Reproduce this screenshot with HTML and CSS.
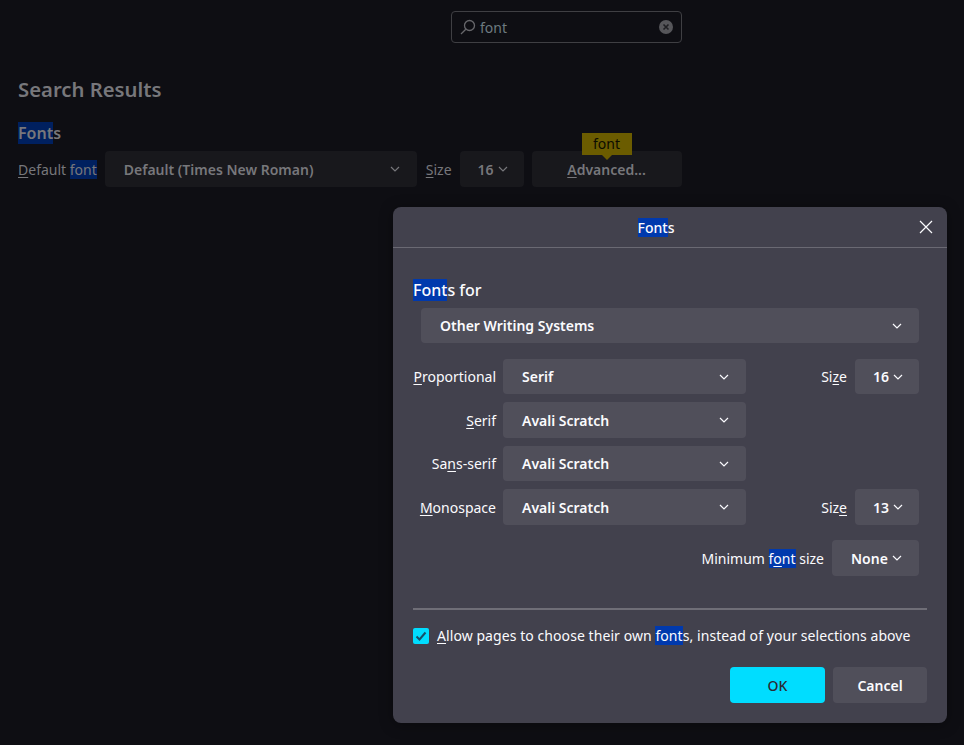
FILE: index.html

```html
<!DOCTYPE html>
<html lang="en">
<head>
  <meta charset="UTF-8" />
  <title>Settings - Fonts</title>
  <link rel="stylesheet" href="styles.css">
</head>
<body>
  <main class="page">
    <div class="search-box">
      <svg class="search-icon" width="16" height="16" viewBox="0 0 16 16"><circle cx="9.5" cy="6.5" r="5" /><path d="M5.8 10.2 1 15" /></svg>
      <span class="search-text">font</span>
      <svg class="search-clear" width="14" height="14" viewBox="0 0 14 14"><circle cx="7" cy="7" r="7" /><path d="M4.5 4.5l5 5M9.5 4.5l-5 5" /></svg>
    </div>

    <h1 class="results-title">Search Results</h1>
    <h2 class="section-title"><span class="hl-dim">Font</span>s</h2>

    <div class="default-row">
      <span class="default-label"><u>D</u>efault <span class="hl-dim">font</span></span>
      <div class="dim-select dim-select-font">
        <span>Default (Times New Roman)</span>
        <svg class="chevron" width="10" height="6" viewBox="0 0 10 6"><path d="M1 1l4 4 4-4" /></svg>
      </div>
      <span class="default-label"><u>S</u>ize</span>
      <div class="dim-select dim-select-size">
        <span>16</span>
        <svg class="chevron" width="10" height="6" viewBox="0 0 10 6"><path d="M1 1l4 4 4-4" /></svg>
      </div>
      <div class="dim-button">
        <span><u>A</u>dvanced...</span>
        <div class="tooltip">font</div>
      </div>
    </div>
  </main>

  <section class="dialog">
    <header class="dialog-head">
      <div class="dialog-title"><span class="hl">Font</span>s</div>
      <svg class="dialog-close" width="14" height="14" viewBox="0 0 14 14"><path d="M1 1l12 12M13 1L1 13" /></svg>
    </header>

    <div class="dialog-body">
      <h3 class="fonts-for"><span class="hl">Font</span>s for</h3>
      <div class="select select-full">
        <span>Other Writing Systems</span>
        <svg class="chevron" width="10" height="6" viewBox="0 0 10 6"><path d="M1 1l4 4 4-4" /></svg>
      </div>

      <div class="font-rows">
        <div class="font-row">
          <span class="row-label"><u>P</u>roportional</span>
          <div class="select select-wide">
            <span>Serif</span>
            <svg class="chevron" width="10" height="6" viewBox="0 0 10 6"><path d="M1 1l4 4 4-4" /></svg>
          </div>
          <div class="size-group">
            <span>Si<u>z</u>e</span>
            <div class="select select-size">
              <span>16</span>
              <svg class="chevron" width="10" height="6" viewBox="0 0 10 6"><path d="M1 1l4 4 4-4" /></svg>
            </div>
          </div>
        </div>
        <div class="font-row">
          <span class="row-label"><u>S</u>erif</span>
          <div class="select select-wide">
            <span>Avali Scratch</span>
            <svg class="chevron" width="10" height="6" viewBox="0 0 10 6"><path d="M1 1l4 4 4-4" /></svg>
          </div>
        </div>
        <div class="font-row">
          <span class="row-label">Sa<u>n</u>s-serif</span>
          <div class="select select-wide">
            <span>Avali Scratch</span>
            <svg class="chevron" width="10" height="6" viewBox="0 0 10 6"><path d="M1 1l4 4 4-4" /></svg>
          </div>
        </div>
        <div class="font-row">
          <span class="row-label"><u>M</u>onospace</span>
          <div class="select select-wide">
            <span>Avali Scratch</span>
            <svg class="chevron" width="10" height="6" viewBox="0 0 10 6"><path d="M1 1l4 4 4-4" /></svg>
          </div>
          <div class="size-group">
            <span>Siz<u>e</u></span>
            <div class="select select-size">
              <span>13</span>
              <svg class="chevron" width="10" height="6" viewBox="0 0 10 6"><path d="M1 1l4 4 4-4" /></svg>
            </div>
          </div>
        </div>
      </div>

      <div class="min-row">
        <span>Minimum <span class="hl">f<u>o</u>nt</span> size</span>
        <div class="select select-min">
          <span>None</span>
          <svg class="chevron" width="10" height="6" viewBox="0 0 10 6"><path d="M1 1l4 4 4-4" /></svg>
        </div>
      </div>

      <hr class="divider" />

      <div class="check-row">
        <svg class="checkbox" width="16" height="16" viewBox="0 0 16 16"><rect width="16" height="16" rx="2" /><path d="M3.5 8.5l3 3 6-7" /></svg>
        <span class="check-label"><u>A</u>llow pages to choose their own <span class="hl">font</span>s, instead of your selections above</span>
      </div>

      <div class="dialog-actions">
        <button class="btn btn-ok">OK</button>
        <button class="btn btn-cancel">Cancel</button>
      </div>
    </div>
  </section>
</body>
</html>
```

FILE: styles.css

```css
html, body {
  height: 100%;
}

body {
  margin: 0;
  background: #0e0e13;
  color: #fbfbfe;
  font-family: "Noto Sans", "Open Sans", sans-serif;
  font-size: 14px;
  overflow: hidden;
}

u {
  text-underline-offset: 2px;
}

.hl {
  background: #0039ad;
}

.hl-dim {
  background: #00205f;
}

/* page behind the dialog */
.page {
  width: 664px;
  margin-left: 18px;
  padding-top: 11px;
  display: flex;
  flex-direction: column;
  color: #77777b;
}

.search-box {
  align-self: flex-end;
  width: 231px;
  height: 32px;
  box-sizing: border-box;
  border: 1px solid #3f3f43;
  border-radius: 4px;
  display: flex;
  align-items: center;
  padding: 0 8px;
  gap: 4px;
}

.search-icon {
  fill: none;
  stroke: #67676b;
  stroke-width: 1.3;
}

.search-text {
  flex: 1;
  color: #6d7a80;
  font-size: 14px;
}

.search-clear circle {
  fill: #56565a;
}

.search-clear path {
  stroke: #1f1f23;
  stroke-width: 1.6;
}

.results-title {
  margin: 32px 0 0;
  font-size: 20.3px;
  line-height: 28px;
  font-weight: 600;
}

.section-title {
  margin: 19px 0 0;
  font-size: 16px;
  line-height: 22px;
  font-weight: 600;
}

.default-row {
  margin-top: 7px;
  display: flex;
  align-items: center;
  gap: 8px;
}

.dim-select, .dim-button {
  height: 36px;
  box-sizing: border-box;
  background: #18181c;
  border-radius: 4px;
  display: flex;
  align-items: center;
  font-weight: 600;
  position: relative;
}

.dim-select-font {
  width: 312px;
  margin-right: 1px;
  padding: 0 17px 0 19px;
  justify-content: space-between;
}

.dim-select-size {
  width: 64px;
  padding: 0 17px 0 18px;
  gap: 4px;
}

.dim-button {
  width: 150px;
  justify-content: center;
}

.chevron {
  fill: none;
  stroke: currentColor;
  stroke-width: 1.2;
  flex: none;
}

.tooltip {
  position: absolute;
  left: 50px;
  top: -18px;
  width: 50px;
  height: 22px;
  background: #6b5c00;
  color: #0c0c00;
  font-weight: 400;
  font-size: 14px;
  line-height: 22px;
  text-align: center;
}

.tooltip::after {
  content: "";
  position: absolute;
  left: 20px;
  top: 22px;
  border: 5px solid transparent;
  border-top-color: #6b5c00;
  border-bottom: 0;
}

/* dialog */
.dialog {
  position: absolute;
  left: 393px;
  top: 207px;
  width: 554px;
  height: 516px;
  background: #42414d;
  border-radius: 8px;
  box-shadow: 0 2px 14px rgba(0, 0, 0, 0.35);
}

.dialog-head {
  box-sizing: border-box;
  border-bottom: 1px solid #6a6973;
  height: 41px;
  display: flex;
  align-items: center;
  padding-right: 14px;
}

.dialog-title {
  flex: 1;
  text-align: center;
  font-size: 14px;
  font-weight: 500;
}

.dialog-close {
  fill: none;
  stroke: #fbfbfe;
  stroke-width: 1.2;
}

.dialog-body {
  padding: 30px 20px 0;
}

.fonts-for {
  margin: 0;
  font-size: 16px;
  line-height: 24px;
  font-weight: 500;
}

.select {
  box-sizing: border-box;
  background: #504f5a;
  border-radius: 4px;
  display: flex;
  align-items: center;
  font-weight: 600;
}

.select-full {
  margin: 6px 8px 0;
  height: 35px;
  padding: 0 17px 0 19px;
  justify-content: space-between;
}

.font-rows {
  margin: 16px 8px 0 0;
  display: flex;
  flex-direction: column;
  gap: 8px;
}

.font-row {
  display: flex;
  align-items: center;
  gap: 7px;
}

.row-label {
  width: 83px;
  text-align: right;
  white-space: nowrap;
}

.select-wide {
  width: 243px;
  height: 35px;
  padding: 0 17px 0 19px;
  justify-content: space-between;
}

.size-group {
  margin-left: auto;
  display: flex;
  align-items: center;
  gap: 8px;
}

.select-size {
  width: 64px;
  height: 35px;
  padding: 0 17px 0 18px;
  gap: 4px;
}

.font-row:nth-child(even) .select {
  height: 36px;
}

.min-row {
  margin: 15px 8px 0 0;
  display: flex;
  justify-content: flex-end;
  align-items: center;
  gap: 8px;
}

.select-min {
  width: 87px;
  height: 36px;
  padding: 0 18px 0 19px;
  gap: 4px;
}

.divider {
  margin: 32px 0 0;
  border: 0;
  height: 2px;
  background: #6f6e77;
}

.check-row {
  margin-top: 15px;
  display: flex;
  align-items: center;
  gap: 8px;
  height: 22px;
  white-space: nowrap;
}

.check-label {
  letter-spacing: 0.07px;
  margin-bottom: 2px;
}

.checkbox rect {
  fill: #00ddff;
}

.checkbox path {
  fill: none;
  stroke: #15506a;
  stroke-width: 2;
}

.dialog-actions {
  margin-top: 20px;
  display: flex;
  justify-content: flex-end;
  gap: 8px;
}

.btn {
  height: 36px;
  border: 0;
  border-radius: 4px;
  font-family: inherit;
  font-size: 14px;
  font-weight: 600;
}

.btn-ok {
  width: 95px;
  background: #00ddff;
  color: #2b2a33;
  font-weight: 500;
}

.btn-cancel {
  width: 94px;
  background: #504f5a;
  color: #fbfbfe;
}
```
